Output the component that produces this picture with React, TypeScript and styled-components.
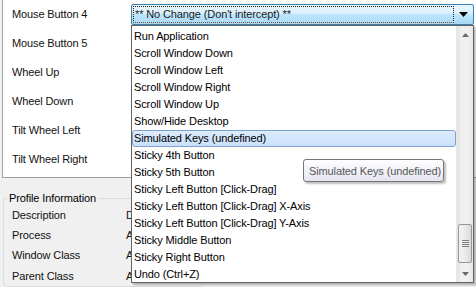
import React from "react";
import styled, { createGlobalStyle } from "styled-components";

const Global = createGlobalStyle`
  html, body { margin: 0; padding: 0; background: #f0f0f0; }
  body { font-family: Tahoma, "Liberation Sans", Arial, sans-serif; font-size: 11px; letter-spacing: -0.12px; color: #000; }
  * { box-sizing: border-box; }
`;

const Screen = styled.div`
  position: relative;
  width: 476px;
  height: 287px;
  overflow: hidden;
  background: #f0f0f0;
  display: flex;
  flex-direction: column;
`;

const MappingPanel = styled.div`
  margin-left: 2px;
  width: 474px;
  height: 184px;
  background: #fff;
  border-left: 1px solid #a0a0a0;
  border-bottom: 1px solid #a0a0a0;
  display: flex;
  flex-direction: column;
`;

const MapRow = styled.div`
  height: 29px;
  display: grid;
  grid-template-columns: 128px 343px;
  align-items: center;
`;

const RowLabel = styled.span`
  padding-left: 9px;
  padding-bottom: 2px;
  white-space: nowrap;
  color: #111;
`;

const Combo = styled.div`
  position: relative;
  height: 21px;
  margin-top: -1px;
  border: 1px solid #3c7fb1;
  border-radius: 2px;
  background: linear-gradient(#eaf6fd 0%, #d9f0fc 45%, #bee6fd 50%, #a7d9f5 100%);
  display: flex;
  align-items: center;
  padding: 0 1px;
`;

const FocusBox = styled.div`
  flex: 1;
  height: 17px;
  border: 1px dotted #202020;
  border-bottom-color: #8a4a1c;
  display: flex;
  align-items: center;
  padding-left: 1px;
  color: #1a1a1a;
  white-space: nowrap;
`;

const ArrowCell = styled.div`
  width: 18px;
  display: flex;
  justify-content: center;
  align-items: center;
`;

const GroupArea = styled.div`
  flex: 1;
  padding: 14px 0 0 3px;
`;

const GroupBox = styled.fieldset`
  margin: 0;
  padding: 0 0 0 8px;
  width: 200px;
  border: 1px solid #d5dfe5;
  border-radius: 3px;
  display: flex;
  flex-direction: column;
`;

const GroupLegend = styled.legend`
  padding: 0 2px;
  margin-left: -5px;
  color: #000;
  line-height: 13px;
`;

const InfoRow = styled.div<{ $h: number }>`
  height: ${(p) => p.$h}px;
  display: grid;
  grid-template-columns: 114px 1fr;
  align-items: center;
  color: #111;
`;

const DropList = styled.div`
  position: absolute;
  left: 131px;
  top: 25px;
  width: 343px;
  height: 258px;
  background: #fff;
  border: 1px solid #646464;
  box-shadow: 2px 2px 2px rgba(0, 0, 0, 0.28);
  display: flex;
`;

const Items = styled.div`
  flex: 1;
  padding-top: 2px;
  display: flex;
  flex-direction: column;
`;

const Item = styled.div<{ $hot?: boolean }>`
  height: 17px;
  line-height: 15px;
  padding-left: 1px;
  white-space: nowrap;
  border: 1px solid ${(p) => (p.$hot ? "#7da2ce" : "transparent")};
  border-radius: 3px;
  background: ${(p) => (p.$hot ? "linear-gradient(#dcebfc, #c9e0fb)" : "transparent")};
`;

const ScrollBar = styled.div`
  width: 17px;
  background: linear-gradient(90deg, #e3e3e3, #f0f0f0 30%, #f0f0f0 70%, #e6e6e6);
  border-left: 1px solid #e8e8e8;
  display: flex;
  flex-direction: column;
  align-items: center;
`;

const ScrollArrow = styled.div`
  height: 17px;
  width: 100%;
  display: flex;
  align-items: center;
  justify-content: center;
`;

const Track = styled.div`
  flex: 1;
  width: 100%;
  display: flex;
  flex-direction: column;
  justify-content: flex-end;
  padding: 0 1px;
`;

const Thumb = styled.div`
  height: 39px;
  margin-bottom: 2px;
  border: 1px solid #979797;
  border-radius: 2px;
  background: linear-gradient(90deg, #f2f2f2, #ebebeb 50%, #d9d9d9);
  display: flex;
  align-items: center;
  justify-content: center;
`;

const Tooltip = styled.div`
  position: absolute;
  left: 303px;
  top: 159px;
  width: 141px;
  height: 23px;
  border: 1px solid #767676;
  border-radius: 3px;
  background: linear-gradient(#ffffff, #e4e5f0);
  box-shadow: 2px 2px 2px rgba(0, 0, 0, 0.25);
  color: #575757;
  display: flex;
  align-items: center;
  padding-left: 5px;
  white-space: nowrap;
`;

const items = [
  "Run Application",
  "Scroll Window Down",
  "Scroll Window Left",
  "Scroll Window Right",
  "Scroll Window Up",
  "Show/Hide Desktop",
  "Simulated Keys (undefined)",
  "Sticky 4th Button",
  "Sticky 5th Button",
  "Sticky Left Button [Click-Drag]",
  "Sticky Left Button [Click-Drag] X-Axis",
  "Sticky Left Button [Click-Drag] Y-Axis",
  "Sticky Middle Button",
  "Sticky Right Button",
  "Undo (Ctrl+Z)",
];

const buttons = ["Mouse Button 4", "Mouse Button 5", "Wheel Up", "Wheel Down", "Tilt Wheel Left", "Tilt Wheel Right"];

const info: [string, string, number][] = [
  ["Description", "Default", 20],
  ["Process", "All", 20],
  ["Window Class", "All", 20],
  ["Parent Class", "All", 21],
];

export default function App() {
  return (
    <Screen>
      <Global />
      <MappingPanel>
        {buttons.map((b, i) => (
          <MapRow key={b}>
            <RowLabel>{b}</RowLabel>
            {i === 0 ? (
              <Combo>
                <FocusBox>** No Change (Don't intercept) **</FocusBox>
                <ArrowCell>
                  <svg width="9" height="5" viewBox="0 0 9 5">
                    <path d="M0 0h9L4.5 5z" fill="#000" />
                  </svg>
                </ArrowCell>
              </Combo>
            ) : (
              <span />
            )}
          </MapRow>
        ))}
      </MappingPanel>
      <GroupArea>
        <GroupBox>
          <GroupLegend>Profile Information</GroupLegend>
          {info.map(([k, v, h]) => (
            <InfoRow key={k} $h={h}>
              <span>{k}</span>
              <span>{v}</span>
            </InfoRow>
          ))}
        </GroupBox>
      </GroupArea>
      <DropList>
        <Items>
          {items.map((t) => (
            <Item key={t} $hot={t.startsWith("Simulated")}>
              {t}
            </Item>
          ))}
        </Items>
        <ScrollBar>
          <ScrollArrow>
            <svg width="7" height="4" viewBox="0 0 7 4">
              <path d="M3.5 0L7 4H0z" fill="#6a6a6a" />
            </svg>
          </ScrollArrow>
          <Track>
            <Thumb>
              <svg width="7" height="8" viewBox="0 0 7 8">
                <path d="M0 0.5h7M0 2.5h7M0 4.5h7M0 6.5h7" stroke="#808080" strokeWidth="1" />
              </svg>
            </Thumb>
          </Track>
          <ScrollArrow>
            <svg width="7" height="4" viewBox="0 0 7 4">
              <path d="M0 0h7L3.5 4z" fill="#6a6a6a" />
            </svg>
          </ScrollArrow>
        </ScrollBar>
      </DropList>
      <Tooltip>Simulated Keys (undefined)</Tooltip>
    </Screen>
  );
}
